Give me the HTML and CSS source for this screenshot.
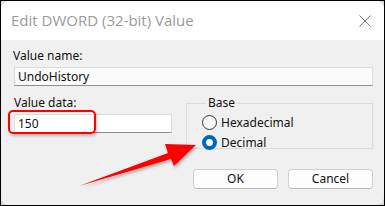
FILE: index.html
```html
<!DOCTYPE html>
<html>
<head>
<meta charset="utf-8">
<link rel="stylesheet" href="styles.css">
</head>
<body>
<div class="frame">
  <div class="dialog">
    <div class="titlebar">
      <span class="title">Edit DWORD (32-bit) Value</span>
      <svg class="close" width="12" height="12" viewBox="0 0 12 12"><path d="M0.5 0.5 L11.5 11.5 M11.5 0.5 L0.5 11.5" stroke="#7a7a7a" stroke-width="1" fill="none"/></svg>
    </div>
    <div class="content">
      <div class="label">Value name:</div>
      <div class="field name-field">UndoHistory</div>
      <div class="row">
        <div class="left">
          <div class="label">Value data:</div>
          <div class="field data-field">150</div>
        </div>
        <div class="right">
          <fieldset class="base">
            <legend>Base</legend>
            <div class="radio"><span class="dot"></span><span>Hexadecimal</span></div>
            <div class="radio"><span class="dot checked"></span><span>Decimal</span></div>
          </fieldset>
          <div class="buttons">
            <div class="btn">OK</div>
            <div class="btn">Cancel</div>
          </div>
        </div>
      </div>
    </div>
  </div>
  <div class="highlight"></div>
  <svg class="arrow" width="385" height="206" viewBox="0 0 385 206">
    <defs>
      <filter id="sh" x="-10%" y="-10%" width="130%" height="140%">
        <feDropShadow dx="1" dy="2" stdDeviation="1.5" flood-color="#000" flood-opacity="0.3"/>
      </filter>
    </defs>
    <polygon points="79,186 168,153 165,144 196,145 174,166 171,159" fill="#f00" filter="url(#sh)"/>
  </svg>
</div>
</body>
</html>
```

FILE: styles.css
```css
html, body {
  margin: 0;
  padding: 0;
}
body {
  width: 385px;
  height: 206px;
  overflow: hidden;
  background: #000;
}
.frame {
  position: relative;
  width: 383px;
  height: 204px;
  border: 1px solid #000;
  background: #d8d8d8;
  overflow: hidden;
}
.dialog {
  width: 383px;
  height: 204px;
  box-sizing: border-box;
  border-radius: 8px;
  overflow: hidden;
  background: #f0f0f0;
  display: flex;
  flex-direction: column;
  font-family: "Noto Sans", "DejaVu Sans", sans-serif;
  font-size: 12px;
  color: #111;
}
.titlebar {
  height: 39px;
  flex: none;
  background: #fff;
  display: flex;
  align-items: center;
  justify-content: space-between;
  padding: 0 13px 0 10px;
}
.title {
  font-family: "Open Sans", "Noto Sans", sans-serif;
  font-size: 15px;
  color: #9a9a9a;
  margin-top: -1px;
}
.content {
  padding: 8px 11px 0 12px;
  display: flex;
  flex-direction: column;
}
.label {
  height: 16px;
  line-height: 16px;
}
.field {
  box-sizing: border-box;
  height: 19px;
  line-height: 17px;
  padding-left: 3px;
  border: 1px solid #dcdcdc;
  border-bottom-color: #8e8e8e;
}
.name-field {
  margin-top: 3px;
  margin-left: 1px;
  background: #fafafa;
}
.row {
  display: grid;
  grid-template-columns: 159px 187px;
  column-gap: 14px;
  margin-top: 9px;
}
.left {
  display: flex;
  flex-direction: column;
  padding-left: 1px;
}
.data-field {
  margin-top: 3px;
  background: #fff;
}
.right {
  display: flex;
  flex-direction: column;
}
.base {
  margin: 1px 0 0 0;
  padding: 3px 0 4px 15px;
  border: 1px solid #dcdcdc;
  height: 44px;
  box-sizing: content-box;
}
.base legend {
  padding: 0 2px;
  margin-left: 4px;
  line-height: 14px;
}
.radio {
  display: flex;
  align-items: center;
  gap: 4px;
  height: 19.5px;
}
.dot {
  width: 15px;
  height: 15px;
  box-sizing: border-box;
  border-radius: 50%;
  border: 1px solid #333;
  background: #f8f8f8;
}
.dot.checked {
  border: 4.5px solid #0067c0;
  background: #fff;
}
.buttons {
  display: flex;
  justify-content: flex-end;
  gap: 10px;
  margin-top: 20px;
}
.btn {
  width: 85px;
  height: 20px;
  box-sizing: border-box;
  background: #fdfdfd;
  border: 1px solid #d0d0d0;
  border-bottom-color: #b8b8b8;
  border-radius: 4px;
  text-align: center;
  line-height: 18px;
}
.highlight {
  position: absolute;
  left: 7px;
  top: 109px;
  width: 88px;
  height: 24px;
  box-sizing: border-box;
  border: 2px solid #f00;
  border-radius: 5px;
  box-shadow: 1px 2px 3px rgba(0,0,0,0.25);
}
.arrow {
  position: absolute;
  left: -1px;
  top: -1px;
}
```
